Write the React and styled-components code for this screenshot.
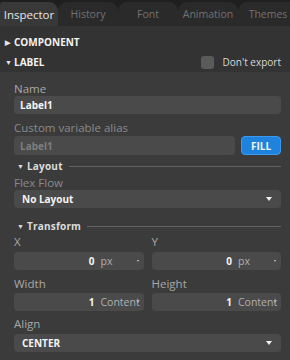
import React from 'react';
import styled, { createGlobalStyle } from 'styled-components';

const GlobalStyle = createGlobalStyle`
  body {
    margin: 0;
    background: #3b3b3b;
    font-family: "Open Sans", "Noto Sans", sans-serif;
  }
  * { box-sizing: border-box; }
`;

const tabs = ["Inspector", "History", "Font", "Animation", "Themes"];

const Panel = styled.div`
  width: 290px;
  height: 360px;
  background: #3b3b3b;
  overflow: hidden;
`;

const TabBar = styled.div`
  display: flex;
  height: 26px;
  padding-top: 2px;
  background: #1f1f1f;
`;

const Tab = styled.div`
  width: ${p => p.active ? 58 : 60}px;
  flex-shrink: 0;
  display: flex;
  align-items: center;
  justify-content: center;
  border-radius: ${p => p.active ? '3px 9px 0 0' : '9px 9px 0 0'};
  background: ${p => p.active ? '#383838' : '#2a2a2a'};
  color: ${p => p.active ? '#e6e6e6' : '#727272'};
  font-size: ${p => p.active ? 11.5 : 10.5}px;
  white-space: nowrap;
`;

const Header = styled.div`
  background: #333333;
  padding-top: 6px;
`;

const HeaderRow = styled.div`
  display: flex;
  align-items: center;
  height: 20px;
  padding: 0 9px 0 5px;
  color: #f2f2f2;
  font-size: 10px;
  font-weight: 700;
`;

const Arrow = styled.span`
  width: 9px;
  font-size: 7px;
  color: #e6e6e6;
`;

const Spacer = styled.div`
  flex: 1;
`;

const Check = styled.div`
  width: 13px;
  height: 13px;
  border-radius: 3px;
  background: #5a5a5a;
  margin-right: 9px;
`;

const CheckLabel = styled.span`
  font-weight: 400;
  font-size: 10px;
  color: #d8d8d8;
`;

const Body = styled.div`
  padding: 10px 9px 0 14px;
`;

const Label = styled.div`
  font-size: 11.5px;
  color: ${p => p.dim ? '#8a8a8a' : '#a8a8a8'};
  height: 14px;
  line-height: 14px;
  margin-top: ${p => p.gap || 0}px;
  margin-bottom: ${p => p.after || 0}px;
  white-space: nowrap;
`;

const Field = styled.div`
  height: ${p => p.h || 18}px;
  border-radius: 4px;
  background: #4a4a4a;
  display: flex;
  align-items: center;
  padding: 0 9px 0 ${p => p.select ? 8 : 6}px;
  font-size: 10px;
  font-weight: 700;
  color: ${p => p.muted ? '#7e7e7e' : '#f4f4f4'};
  flex: 1;
  min-width: 0;
`;

const Row = styled.div`
  display: flex;
  gap: ${p => p.gap || 6}px;
`;

const Col = styled.div`
  flex: 1;
  min-width: 0;
`;

const FillButton = styled.button`
  width: 40px;
  height: 19px;
  border: 1px solid #3a9af0;
  border-radius: 4px;
  background: #1f82dc;
  color: #f4f4f4;
  font-family: inherit;
  font-size: 10px;
  font-weight: 700;
  padding: 0;
`;

const SectionTitle = styled.div`
  display: flex;
  align-items: center;
  margin: ${p => p.top}px 0 ${p => p.bottom}px 3px;
  height: 12px;
  color: #dcdcdc;
  font-size: 10px;
  font-weight: 700;
  letter-spacing: 0.2px;

  &::after {
    content: "";
    flex: 1;
    height: 1px;
    background: #626262;
    margin-left: 6px;
  }
`;

const SubArrow = styled.span`
  width: 10px;
  font-size: 7px;
  color: #dcdcdc;
`;

const Caret = styled.span`
  margin-left: auto;
  width: 0;
  height: 0;
  border-left: 3px solid transparent;
  border-right: 3px solid transparent;
  border-top: 4px solid #f0f0f0;
`;

const NumField = styled(Field)`
  justify-content: flex-end;
  padding-right: 3px;
`;

const Unit = styled.span`
  font-weight: 400;
  color: #b0b0b0;
  margin-left: 6px;
  width: 40px;
  font-size: 10.5px;
  position: relative;
  white-space: nowrap;
`;

const MiniCaret = styled.span`
  position: absolute;
  right: 2px;
  top: 6px;
  border-left: 1.5px solid transparent;
  border-right: 1.5px solid transparent;
  border-top: 2px solid #d0d0d0;
`;

const Num = ({ value, unit }) => (
  <NumField>
    {value}
    <Unit>{unit}<MiniCaret /></Unit>
  </NumField>
);

const App = () => (
  <Panel>
    <GlobalStyle />
    <TabBar>
      {tabs.map((t, i) => <Tab key={t} active={i === 0}>{t}</Tab>)}
    </TabBar>
    <Header>
      <HeaderRow><Arrow>▶</Arrow>COMPONENT</HeaderRow>
      <HeaderRow><Arrow>▼</Arrow>LABEL<Spacer /><Check /><CheckLabel>Don't export</CheckLabel></HeaderRow>
    </Header>
    <Body>
      <Label>Name</Label>
      <Field>Label1</Field>
      <Label gap={7} after={1} dim>Custom variable alias</Label>
      <Row gap={6}>
        <Field muted h={19}>Label1</Field>
        <FillButton>FILL</FillButton>
      </Row>
      <SectionTitle top={5} bottom={4}><SubArrow>▼</SubArrow>Layout</SectionTitle>
      <Label dim>Flex Flow</Label>
      <Field select>No Layout<Caret /></Field>
      <SectionTitle top={12} bottom={3}><SubArrow>▼</SubArrow>Transform</SectionTitle>
      <Row gap={8}>
        <Col><Label after={3}>X</Label><Num value="0" unit="px" /></Col>
        <Col><Label after={3}>Y</Label><Num value="0" unit="px" /></Col>
      </Row>
      <Row gap={8}>
        <Col><Label gap={7} after={2}>Width</Label><Num value="1" unit="Content" /></Col>
        <Col><Label gap={7} after={2}>Height</Label><Num value="1" unit="Content" /></Col>
      </Row>
      <Label gap={6} after={3}>Align</Label>
      <Field select>CENTER<Caret /></Field>
    </Body>
  </Panel>
);

export default App;
